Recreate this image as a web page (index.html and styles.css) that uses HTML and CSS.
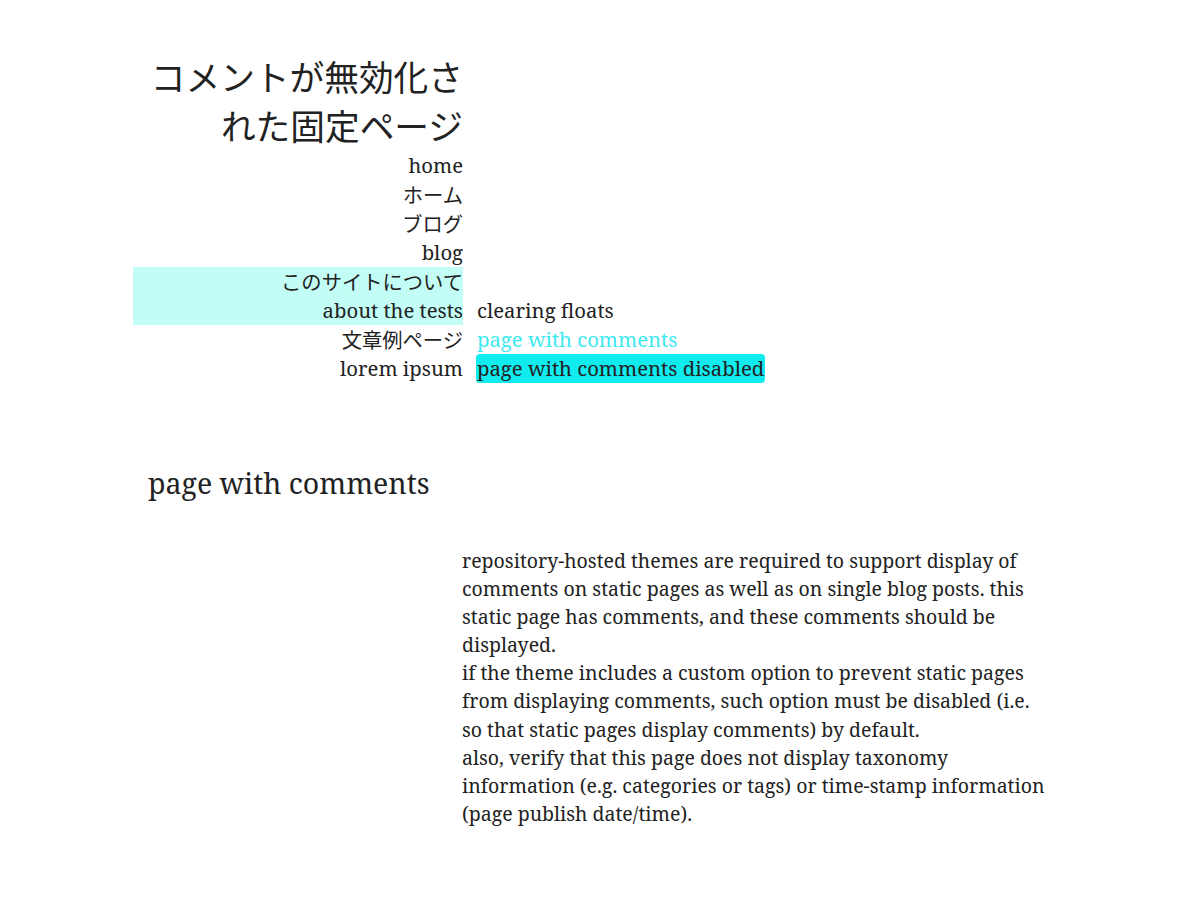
FILE: index.html
```html
<!DOCTYPE html>
<html lang="ja">
<head>
    <meta charset="UTF-8">
    <meta name="viewport" content="width=device-width, initial-scale=1.0">
    <title>コメントが無効化された固定ページ</title>
    <link rel="stylesheet" href="styles.css">
</head>
<body>

    <header class="site-header">
        <h1 class="site-title">コメントが無効化された固定ページ</h1>

        <ul class="main-menu">
            <li>home</li>
            <li class="ja">ホーム</li>
            <li class="ja">ブログ</li>
            <li>blog</li>
            <li class="current-parent">
                <span class="ja">このサイトについて</span>
                <span>about the tests</span>
                <ul class="sub-menu">
                    <li>clearing floats</li>
                    <li class="active">page with comments</li>
                    <li class="current">page with comments disabled</li>
                </ul>
            </li>
            <li class="ja">文章例ページ</li>
            <li>lorem ipsum</li>
        </ul>
    </header>

    <main class="content">
        <h2 class="page-title">page with comments</h2>

        <div class="entry">
            <p>repository-hosted themes are required to support display of comments on static pages as well as on single blog posts. this static page has comments, and these comments should be displayed.</p>
            <p>if the theme includes a custom option to prevent static pages from displaying comments, such option must be disabled (i.e. so that static pages display comments) by default.</p>
            <p>also, verify that this page does not display taxonomy information (e.g. categories or tags) or time-stamp information (page publish date/time).</p>
        </div>
    </main>

</body>
</html>
```

FILE: styles.css
```css
* {
    margin: 0;
    padding: 0;
    box-sizing: border-box;
}

body {
    font-family: 'Noto Serif', 'DejaVu Serif', 'Noto Sans CJK JP', serif;
    color: #222;
    background-color: #fff;
}

.site-header {
    width: 330px;
    margin-left: 133px;
    padding-top: 52px;
    text-align: right;
}

.site-title {
    font-family: 'Noto Sans CJK JP', sans-serif;
    font-weight: normal;
    font-size: 34.7px;
    line-height: 49px;
}

.main-menu {
    list-style: none;
    font-size: 20.3px;
    line-height: 29px;
    padding-top: 1px;
}

.main-menu .ja {
    font-family: 'Noto Sans CJK JP', sans-serif;
}

.current-parent {
    position: relative;
    background-color: #c2fdf6;
}

.current-parent span {
    display: block;
}

.sub-menu {
    position: absolute;
    left: 343px;
    top: 29px;
    list-style: none;
    text-align: left;
    white-space: nowrap;
    background-color: #fff;
}

.sub-menu li {
    padding: 0 1px;
}

.sub-menu .active {
    color: #3ee9ef;
}

.sub-menu .current {
    background-color: #10ebee;
    border-radius: 4px;
}

.content {
    padding-top: 80px;
}

.page-title {
    font-weight: normal;
    font-size: 28.5px;
    line-height: 40px;
    margin-left: 148px;
}

.entry {
    width: 590px;
    margin-left: 462px;
    margin-top: 44px;
    font-size: 19.5px;
    line-height: 28.1px;
}
```
